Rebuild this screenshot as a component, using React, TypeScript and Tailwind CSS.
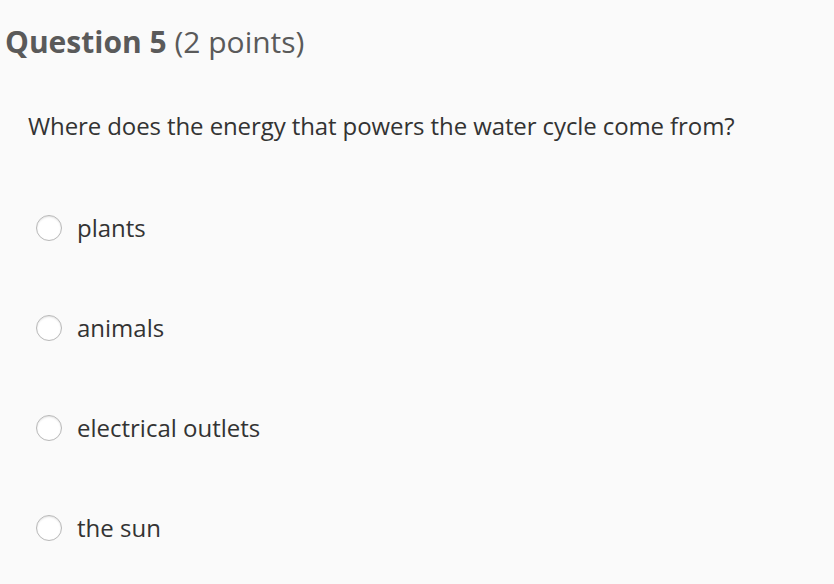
import React from 'react';

const options = ['plants', 'animals', 'electrical outlets', 'the sun'];

export default function App() {
    return (
        <main className="min-h-screen w-full bg-[#fafafa] font-['Open_Sans',sans-serif] overflow-hidden">
            <h2 className="pl-[5px] pt-[22px] text-[30px] leading-[40px] text-[#5a5a5a]">
                <span className="font-bold">Question 5</span> (2 points)
            </h2>

            <p className="pl-[28px] pt-[49px] text-[24px] leading-[30px] text-[#333333] tracking-[-0.1px]">
                Where does the energy that powers the water cycle come from?
            </p>

            <div className="pl-[36px] pt-[72px] flex flex-col gap-[70px]">
                {options.map((opt) => (
                    <label key={opt} className="flex items-center gap-[15px] h-[30px]">
                        <span className="w-[26px] h-[26px] rounded-full border border-[#b8b8b8] bg-white shadow-[inset_0_1px_2px_rgba(0,0,0,0.12)]" />
                        <span className="text-[24px] leading-[30px] text-[#333333]">{opt}</span>
                    </label>
                ))}
            </div>
        </main>
    );
}
